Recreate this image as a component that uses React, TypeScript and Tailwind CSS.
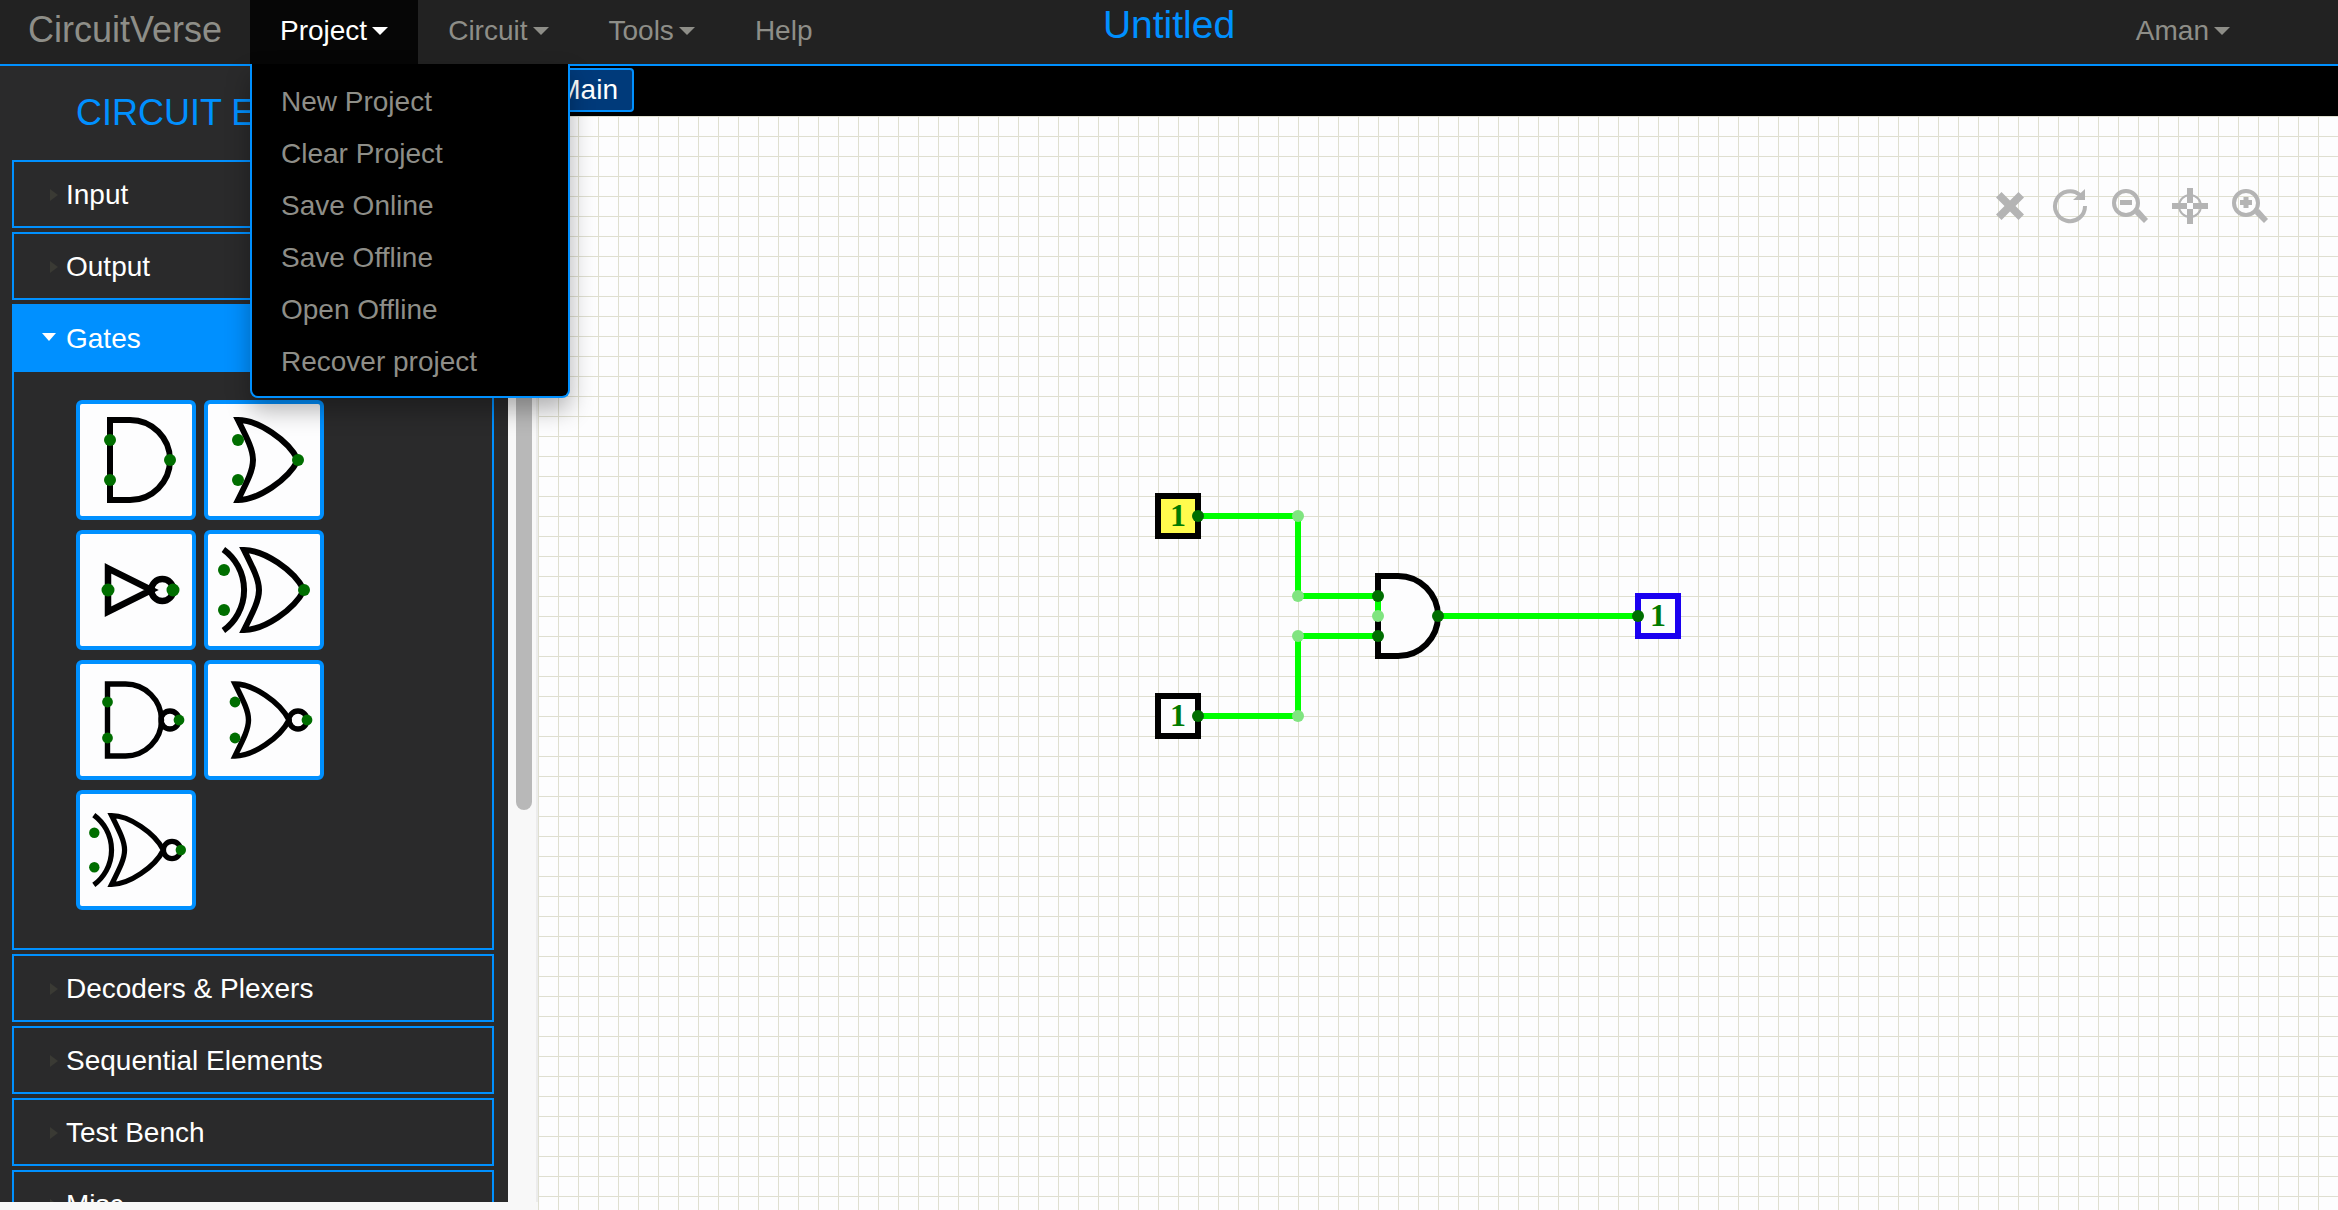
import React from "react";

const Caret = () => (
  <span aria-hidden="true" className="ml-[5px] inline-block border-x-8 border-t-8 border-x-transparent border-t-current" />
);

const NODE = "#006e00";
const LIGHT = "#80e480";

function Dots({ at, r = 6, fill = NODE }: { at: number[][]; r?: number; fill?: string }) {
  return (
    <>
      {at.map(([x, y]) => (
        <circle key={`${x}-${y}`} cx={x} cy={y} r={r} fill={fill} stroke="none" />
      ))}
    </>
  );
}

const gates = [
  { name: "AND", w: 6, r: 6, d: "M30 16h20a40 40 0 0 1 0 80h-20z", dots: [[30, 36], [30, 76], [90, 56]] },
  { name: "OR", w: 6, r: 6, d: "M30 16c20 0 50 20 60 40c-10 20-40 40-60 40c20-40 20-40 0-80z", dots: [[30, 36], [30, 76], [90, 56]] },
  { name: "NOT", w: 6.5, r: 6.5, d: "M28 34.3L71.5 56L28 77.7z", bubble: [82.3, 11], dots: [[28, 56], [93, 56]] },
  { name: "XOR", w: 6, r: 6, d: "M36 16c20 0 50 20 60 40c-10 20-40 40-60 40c20-40 20-40 0-80z", arc: "M15.4 15.5A50 50 0 0 1 15.4 96.5", dots: [[16, 36], [16, 76], [96, 56]] },
  { name: "NAND", w: 5.4, r: 5.4, d: "M27.5 20h18a36 36 0 0 1 0 72h-18z", bubble: [90, 9], dots: [[27.5, 38], [27.5, 74], [99, 56]] },
  { name: "NOR", w: 5.4, r: 5.4, d: "M27 20c18 0 45 18 54 36c-9 18-36 36-54 36c18-36 18-36 0-72z", bubble: [90, 9], dots: [[27, 38], [27, 74], [99, 56]] },
  { name: "XNOR", w: 5.2, r: 5.2, d: "M31.6 21.5c17.3 0 43.2 17.3 51.8 34.5c-8.6 17.2-34.5 34.5-51.8 34.5c17.3-34.5 17.3-34.5 0-69z", arc: "M13.8 21.1A43.2 43.2 0 0 1 13.8 90.9", bubble: [92, 8.6], dots: [[14.3, 38.7], [14.3, 73.3], [100.8, 56]] },
] as { name: string; w: number; r: number; d: string; arc?: string; bubble?: number[]; dots: number[][] }[];

function GateTile({ gate }: { gate: (typeof gates)[number] }) {
  return (
    <button type="button" aria-label={`${gate.name} gate`} className="size-[120px] rounded-md border-4 border-[#0090ff] bg-[#fdfdfe]">
      <svg viewBox="0 0 112 112" className="size-full" fill="none" stroke="#000" strokeWidth={gate.w}>
        <path d={gate.d} />
        {gate.arc && <path d={gate.arc} />}
        {gate.bubble && <circle cx={gate.bubble[0]} cy={56} r={gate.bubble[1]} />}
        <Dots at={gate.dots} r={gate.r} />
      </svg>
    </button>
  );
}

function Section({ title }: { title: string }) {
  return (
    <button type="button" className="flex h-[68px] w-full shrink-0 items-center border-2 border-[#0090ff] pt-px pl-8 text-left text-white">
      <span aria-hidden="true" className="mr-2 ml-1 border-y-[6px] border-l-8 border-y-transparent border-l-[#3a3a34]" />
      {title}
    </button>
  );
}

function Menu() {
  const items = ["New Project", "Clear Project", "Save Online", "Save Offline", "Open Offline", "Recover project"];
  return (
    <ul className="absolute top-full left-0 z-20 w-[320px] rounded-b-lg border-2 border-t-0 border-[#0090ff] bg-black pt-3 pb-2 text-[#8e8e88] shadow-[0_12px_24px_rgba(0,0,0,0.3)]">
      {items.map((item) => (
        <li key={item}>
          <button type="button" className="block h-[52px] w-full px-[29px] text-left">{item}</button>
        </li>
      ))}
    </ul>
  );
}

const navItem = "flex h-16 items-center px-[30px] pb-0.5";

function NavBar() {
  return (
    <header className="relative z-10 flex h-[66px] shrink-0 items-start border-b-2 border-[#0090ff] bg-[#222222] text-[#8e8e88]">
      <a href="#" className="flex h-16 w-[250px] shrink-0 items-center pb-1 pl-7 text-[36px]">CircuitVerse</a>
      <nav className="flex">
        <div className="relative">
          <button type="button" aria-expanded="true" className={`${navItem} bg-[#060606] text-white`}>Project<Caret /></button>
          <Menu />
        </div>
        <button type="button" className={navItem}>Circuit<Caret /></button>
        <button type="button" className={navItem}>Tools<Caret /></button>
        <button type="button" className={navItem}>Help</button>
      </nav>
      <button type="button" className="mr-[78px] ml-auto flex h-16 items-center px-[30px] pb-0.5">Aman<Caret /></button>
      <h1 className="absolute inset-x-0 top-0 mx-auto w-fit text-[39px] leading-[50px] text-[#0090ff]">Untitled</h1>
    </header>
  );
}

function Sidebar() {
  return (
    <div className="flex w-[538px] shrink-0 flex-col bg-[#f8f8f8] pb-2">
      <div className="flex min-h-0 flex-1">
        <aside className="flex min-w-0 flex-1 flex-col gap-1 overflow-hidden bg-[#2a2a2b] pr-[14px] pl-3">
          <h2 className="h-[90px] shrink-0 pt-0.5 pl-16 text-[36px] leading-[90px] text-[#0090ff]">CIRCUIT ELEMENTS</h2>
          <Section title="Input" />
          <Section title="Output" />
          <section className="shrink-0">
            <button type="button" className="flex h-[68px] w-full items-center bg-[#0090ff] pt-px pl-[30px] text-left text-white">
              <span aria-hidden="true" className="mr-[10px] mb-1 border-x-[7px] border-t-8 border-x-transparent border-t-white" />
              Gates
            </button>
            <div className="border-2 border-t-0 border-[#0090ff] px-[62px] pt-7 pb-[38px]">
              <div className="grid w-fit grid-cols-2 gap-x-2 gap-y-[10px]">
                {gates.map((gate) => <GateTile key={gate.name} gate={gate} />)}
              </div>
            </div>
          </section>
          <Section title="Decoders & Plexers" />
          <Section title="Sequential Elements" />
          <Section title="Test Bench" />
          <Section title="Misc" />
        </aside>
        <div className="w-[30px] border-r-2 border-[#ececec] pl-2">
          <div className="h-[744px] w-4 rounded-full bg-[#b8b8b8]" />
        </div>
      </div>
    </div>
  );
}

const tools = [
  { label: "Delete", body: <path d="M9.5 4L18 12.5L26.5 4L32 9.5L23.5 18L32 26.5L26.5 32L18 23.5L9.5 32L4 26.5L12.5 18L4 9.5z" /> },
  { label: "Refresh", body: <><path d="M33 18A15 15 0 1 1 28 7" fill="none" stroke="currentColor" strokeWidth="4" /><path d="M33 1V12H21z" /></> },
  { label: "Zoom out", body: <><circle cx="14" cy="15" r="12" fill="none" stroke="currentColor" strokeWidth="4" /><path d="M8 12h12v5H8z" /><path d="M24 23l3-2 9 10-4 4-9-9z" /></> },
  { label: "Center", body: <><circle cx="18" cy="18" r="11" fill="none" stroke="currentColor" strokeWidth="2" /><path d="M15 0h6v15h-6zM15 21h6v15h-6zM0 15h15v6H0zM21 15h15v6H21z" /></> },
  { label: "Zoom in", body: <><circle cx="14" cy="15" r="12" fill="none" stroke="currentColor" strokeWidth="4" /><path d="M8 12h3.500V9h5v3H20v5h-3.500v3h-5v-3H8z" /><path d="M24 23l3-2 9 10-4 4-9-9z" /></> },
];

function Pin({ x, y, stroke, fill = "none" }: { x: number; y: number; stroke: string; fill?: string }) {
  return (
    <>
      <rect x={x - 20} y={y - 20} width="40" height="40" fill={fill} stroke={stroke} strokeWidth="6" />
      <text x={x} y={y + 10} textAnchor="middle" className="font-['Liberation_Serif',serif] text-[32px] font-bold" fill="#007a00" stroke="none">1</text>
    </>
  );
}

function Canvas() {
  return (
    <div className="relative min-h-0 flex-1 bg-[#fdfdfe]">
      <svg className="absolute inset-0 size-full" aria-label="Circuit">
        <defs>
          <pattern id="grid" width="20" height="20" patternUnits="userSpaceOnUse">
            <path d="M0.5 0V20M0 0.5H20" stroke="#dfdfd0" fill="none" />
          </pattern>
        </defs>
        <rect width="100%" height="100%" fill="url(#grid)" />
        <g fill="none" strokeWidth="6">
          <Pin x={640} y={400} stroke="#000" fill="#fffb4d" />
          <Pin x={640} y={600} stroke="#000" fill="#fdfdfe" />
          <Pin x={1120} y={500} stroke="#1a00f0" fill="#fdfdfe" />
          <path d="M840 460h20a40 40 0 0 1 0 80h-20z" stroke="#000" fill="#fdfdfe" />
          <path d="M660 400H760V480H840V500M660 600H760V520H840M900 500H1100" stroke="#00ff00" />
        </g>
        <Dots at={[[760, 400], [760, 480], [760, 520], [760, 600], [840, 500]]} fill={LIGHT} />
        <Dots at={[[660, 400], [660, 600], [840, 480], [840, 520], [900, 500], [1100, 500]]} />
      </svg>
      <div className="absolute top-[72px] right-[70px] flex gap-6 text-[#b4b4b4]">
        {tools.map((tool) => (
          <button key={tool.label} type="button" aria-label={tool.label} className="size-9">
            <svg viewBox="0 0 36 36" className="size-9" fill="currentColor">{tool.body}</svg>
          </button>
        ))}
      </div>
    </div>
  );
}

export default function App() {
  return (
    <div className="flex h-screen flex-col overflow-hidden bg-white font-['Liberation_Sans',Arial,sans-serif] text-[28px]">
      <NavBar />
      <div className="flex min-h-0 flex-1">
        <Sidebar />
        <main className="flex min-w-0 flex-1 flex-col">
          <div className="flex h-[50px] shrink-0 bg-black pt-0.5">
            <button type="button" className="flex h-11 w-24 items-center justify-end rounded border-2 border-[#0090ff] bg-[#003a7a] pr-3.5 text-white">Main</button>
          </div>
          <Canvas />
        </main>
      </div>
    </div>
  );
}
